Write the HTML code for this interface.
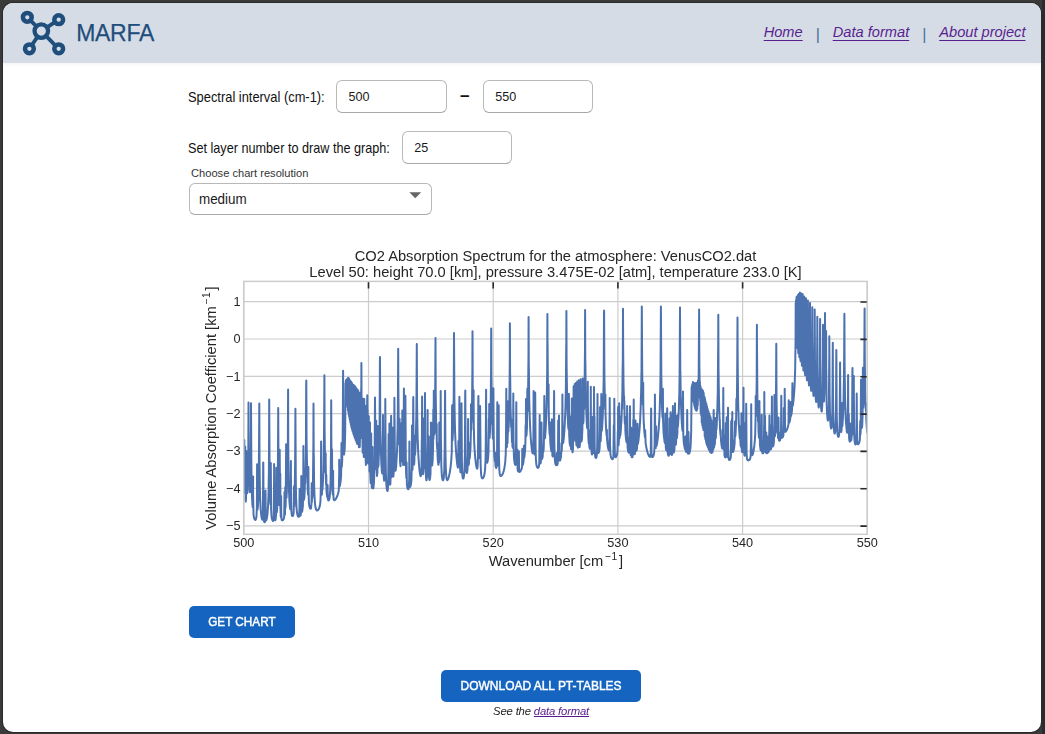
<!DOCTYPE html>
<html lang="en">
<head>
<meta charset="utf-8">
<title>MARFA</title>
<style>
html,body{margin:0;padding:0;}
body{width:1045px;height:734px;overflow:hidden;background:#3a3a3a;font-family:"Liberation Sans",sans-serif;position:relative;}
#strip{position:absolute;left:1042px;top:0;width:3px;height:734px;background:#2a2b2d;}
#win{position:absolute;left:3px;top:3px;width:1037.6px;height:728.7px;background:#fff;border-radius:10px;overflow:hidden;box-shadow:0 0 0 1px #2a2a2a;}
#hdr{position:absolute;left:0;top:0;width:1038px;height:60px;background:#d6dce6;box-shadow:0 1px 4px rgba(0,0,0,0.06);}
#logo{position:absolute;left:0;top:0;}
#brand{position:absolute;left:73.2px;top:15.7px;font-size:23px;line-height:28px;color:#1f4e7c;letter-spacing:-0.3px;-webkit-text-stroke:0.25px #1f4e7c;}
#nav{position:absolute;right:15.5px;top:20px;font-size:14.65px;line-height:18px;font-style:italic;color:#46729a;white-space:nowrap;}
#nav a{color:#581f8e;text-decoration:underline;text-decoration-thickness:1.2px;text-underline-offset:2.6px;}
#nav span{font-style:normal;display:inline-block;width:30px;text-align:center;font-size:16px;position:relative;top:2.6px;}
.lbl{position:absolute;font-size:13.9px;line-height:16px;color:#111;white-space:nowrap;transform-origin:0 50%;}
.inp{position:absolute;box-sizing:border-box;width:110.7px;height:33px;border:1px solid #b8b8b8;border-bottom-color:#a8a8a8;border-radius:6px;background:#fff;font-size:12.6px;line-height:32.2px;padding-left:11.6px;color:#1a1a1a;}
.btn{position:absolute;box-sizing:border-box;height:32px;border-radius:5px;background:#1565c0;color:#fff;font-size:12.5px;font-weight:normal;-webkit-text-stroke:0.45px #fff;line-height:32px;text-align:center;white-space:nowrap;}
.btn span{display:inline-block;transform:scaleX(0.94);transform-origin:50% 50%;}
</style>
</head>
<body>
<div id="strip"></div>
<div id="win">
<div id="hdr">
<svg id="logo" width="70" height="60" viewBox="3 3 70 60">
<g fill="none" stroke="#1f4e7c">
<g stroke-width="3.8">
<line x1="27.3" y1="17.3" x2="41.3" y2="31.1"/>
<line x1="58.7" y1="19.7" x2="41.3" y2="31.1"/>
<line x1="29.4" y1="48.8" x2="41.3" y2="31.1"/>
<line x1="58.7" y1="48.8" x2="41.3" y2="31.1"/>
</g>
<circle cx="41.3" cy="31.1" r="6.75" fill="#d6dce6" stroke-width="4.3"/>
<g stroke-width="4.5">
<circle cx="27.3" cy="17.3" r="4.4" fill="#d6dce6"/>
<circle cx="58.7" cy="19.7" r="4.4" fill="#d6dce6"/>
<circle cx="29.4" cy="48.8" r="4.4" fill="#d6dce6"/>
<circle cx="58.7" cy="48.8" r="4.4" fill="#d6dce6"/>
</g>
</g>
</svg>
<div id="brand">MARFA</div>
<div id="nav"><a>Home</a><span>|</span><a>Data format</a><span>|</span><a>About project</a></div>
</div>
<div class="lbl" style="left:185.2px;top:86px;transform:scaleX(0.927);">Spectral interval (cm-1):</div>
<div class="inp" style="left:333px;top:77px;">500</div>
<div class="lbl" style="left:456.9px;top:82.6px;font-weight:bold;font-size:17px;line-height:20px;">–</div>
<div class="inp" style="left:479.6px;top:77px;width:110.2px;">550</div>
<div class="lbl" style="left:185.4px;top:137px;transform:scaleX(0.911);">Set layer number to draw the graph:</div>
<div class="inp" style="left:398.6px;top:128px;">25</div>
<div class="lbl" style="left:187.6px;top:163px;font-size:11.7px;line-height:14px;color:#333;transform:scaleX(0.951);">Choose chart resolution</div>
<div class="inp" style="left:185.5px;top:179.6px;width:243px;height:32.4px;line-height:30.6px;font-size:13.9px;padding-left:9.8px;"><span style="display:inline-block;transform:scaleX(0.965);transform-origin:0 50%;">medium</span><svg style="position:absolute;left:219.5px;top:8px" width="13" height="7" viewBox="0 0 13 7"><path d="M0.3 0.3 L12.2 0.3 L6.25 6.2 Z" fill="#666"/></svg></div>
<svg id="chart" style="position:absolute;left:0;top:0;will-change:transform;" width="1038" height="729" viewBox="3 3 1038 729" font-family="Liberation Sans, sans-serif" fill="#262626">
<defs><clipPath id="cp"><rect x="243.7" y="281.4" width="623.5" height="252.89999999999998"/></clipPath></defs>
<path d="M243.8,281.4V534.3M368.5,281.4V534.3M493.2,281.4V534.3M617.9,281.4V534.3M742.6,281.4V534.3M867.3,281.4V534.3M243.7,525.8H867.2M243.7,488.4H867.2M243.7,451.1H867.2M243.7,413.7H867.2M243.7,376.4H867.2M243.7,339.0H867.2M243.7,301.6H867.2" stroke="#cccccc" stroke-width="1.2" fill="none"/>
<path clip-path="url(#cp)" d="M243.8,453.4 244.1,474.8 244.1,472.7 244.2,470.6 244.3,440.1 244.5,479.8 244.5,482.3 244.8,492.5 244.9,489.9 244.9,487.8 245.2,446.5 245.3,451.3 245.3,458.9 245.6,499.4 245.7,500.0 245.8,501.6 246.0,498.5 246.0,497.4 246.3,451.0 246.4,461.5 246.4,468.7 246.6,490.4 246.8,477.8 246.8,472.2 246.9,455.3 247.1,493.0 247.2,493.3 247.4,473.3 247.5,481.4 247.5,479.5 247.6,460.9 247.8,482.6 247.9,482.0 247.9,481.4 248.3,458.5 248.3,455.7 248.5,402.5 248.6,429.1 248.7,435.2 249.0,474.9 249.0,476.3 249.4,489.4 249.4,489.9 249.6,491.8 249.8,479.3 249.8,477.0 250.0,492.2 250.1,491.0 250.2,490.6 250.5,478.8 250.5,477.4 250.9,441.5 250.9,436.3 251.0,403.2 251.3,453.7 251.3,456.9 251.6,483.4 251.7,484.5 252.0,496.7 252.0,497.4 252.4,504.3 252.4,504.6 252.7,507.1 252.8,506.9 252.8,506.6 253.1,476.4 253.1,494.7 253.2,499.0 253.5,514.0 253.5,514.3 253.9,516.9 253.9,517.0 254.2,518.3 254.3,518.4 254.6,519.3 254.6,519.3 255.0,519.7 255.0,519.8 255.3,519.9 255.4,519.9 255.4,519.8 255.7,519.5 255.8,519.5 256.1,518.7 256.1,518.6 256.5,516.4 256.5,516.2 256.9,506.4 256.9,504.5 257.1,464.2 257.2,498.2 257.3,501.0 257.6,509.6 257.6,509.6 257.6,509.5 258.0,505.5 258.0,505.1 258.4,496.9 258.4,496.1 258.7,480.2 258.8,478.5 259.1,435.3 259.1,438.9 259.1,437.0 259.3,403.5 259.5,457.4 259.5,460.6 259.9,487.0 259.9,488.2 260.2,500.4 260.3,501.0 260.6,508.1 260.6,508.5 261.0,512.9 261.0,513.2 261.4,516.1 261.4,516.3 261.7,518.2 261.8,518.3 262.1,519.4 262.1,519.4 262.4,519.7 262.5,519.5 262.5,519.5 262.9,516.1 262.9,515.5 263.2,462.5 263.3,462.7 263.6,516.0 263.6,516.8 264.0,521.0 264.0,521.2 264.4,522.1 264.4,522.1 264.6,522.3 264.7,522.3 264.7,522.3 265.1,521.7 265.1,521.6 265.5,508.8 265.5,502.9 265.5,490.5 265.8,520.1 265.9,520.2 266.0,520.6 266.2,520.4 266.2,520.4 266.6,519.4 266.6,519.3 267.0,517.7 267.0,517.5 267.3,515.1 267.4,514.9 267.7,511.2 267.7,510.9 268.1,505.1 268.1,504.5 268.5,494.9 268.5,494.0 268.8,475.4 268.9,473.4 269.2,405.4 269.2,399.5 269.6,468.0 269.6,471.3 270.0,492.6 270.0,493.6 270.3,502.8 270.4,503.2 270.5,504.4 270.7,494.8 270.7,490.4 270.8,463.0 271.1,508.1 271.1,509.1 271.5,515.7 271.5,515.9 271.8,518.3 271.9,518.4 272.2,519.7 272.2,519.8 272.6,520.6 272.6,520.6 273.0,521.0 273.0,521.0 273.0,521.0 273.3,520.7 273.4,520.6 273.7,518.0 273.7,517.5 274.1,476.4 274.1,466.3 274.1,464.0 274.3,503.2 274.5,496.7 274.5,503.4 274.8,519.5 274.9,519.6 275.1,520.3 275.2,520.3 275.2,520.3 275.6,519.5 275.6,519.4 275.9,516.4 276.0,515.9 276.3,471.3 276.3,467.8 276.7,511.7 276.7,512.0 276.8,512.3 277.1,510.2 277.1,509.8 277.4,502.3 277.5,501.5 277.8,484.5 277.8,482.6 278.2,414.3 278.2,408.1 278.6,480.4 278.6,482.5 278.9,499.9 279.0,500.6 279.2,504.9 279.3,504.5 279.3,504.2 279.7,449.8 279.7,450.8 280.1,505.9 280.1,506.0 280.3,473.8 280.4,507.2 280.5,509.2 280.8,516.9 280.8,517.0 280.9,517.0 281.1,496.0 281.2,508.6 281.2,512.4 281.6,519.7 281.6,519.8 281.9,520.3 282.0,520.3 282.3,520.4 282.3,520.4 282.7,520.3 282.7,520.3 283.1,520.0 283.1,520.0 283.4,519.5 283.5,519.5 283.8,518.7 283.8,518.6 284.2,516.9 284.2,516.6 284.5,491.9 284.6,510.4 284.6,512.2 284.8,514.8 284.9,514.0 285.0,513.8 285.3,486.9 285.3,488.1 285.5,507.6 285.7,505.2 285.7,504.5 286.0,464.4 286.1,454.7 286.1,444.3 286.4,496.3 286.4,496.9 286.5,497.7 286.8,492.3 286.8,491.0 287.0,448.3 287.2,477.4 287.2,479.8 287.3,482.4 287.5,473.7 287.6,472.3 287.9,435.2 287.9,429.8 288.1,389.4 288.3,446.8 288.3,450.4 288.7,478.2 288.7,479.4 289.0,492.2 289.1,492.9 289.4,500.5 289.4,500.9 289.8,505.7 289.8,506.0 290.2,508.8 290.2,508.9 290.3,509.3 290.5,508.1 290.6,507.6 290.9,461.1 290.9,465.1 290.9,473.8 291.3,508.8 291.3,509.6 291.7,514.4 291.7,514.5 292.0,515.7 292.1,515.8 292.4,516.1 292.4,516.1 292.5,516.1 292.8,516.0 292.8,515.9 293.2,515.2 293.2,515.2 293.5,513.6 293.6,513.4 293.9,503.2 293.9,498.9 294.0,486.2 294.2,506.6 294.3,506.1 294.3,505.8 294.7,493.2 294.7,490.2 295.0,471.9 295.1,465.7 295.4,414.4 295.4,408.8 295.8,478.9 295.8,480.9 296.1,498.5 296.2,499.3 296.5,507.2 296.5,507.6 296.9,511.6 296.9,511.8 297.3,514.1 297.3,514.2 297.6,515.5 297.7,515.5 298.0,516.3 298.0,516.3 298.4,516.7 298.4,516.7 298.7,516.8 298.8,516.8 298.8,516.8 299.1,516.4 299.2,516.3 299.5,505.5 299.5,500.0 299.6,489.0 299.9,515.4 299.9,515.5 300.1,515.9 300.3,515.8 300.3,515.8 300.6,515.1 300.7,515.0 301.0,512.8 301.0,512.4 301.3,475.9 301.4,486.1 301.4,493.5 301.8,511.9 301.8,512.0 301.9,512.0 302.1,511.5 302.2,511.4 302.5,509.6 302.5,509.4 302.9,505.6 302.9,505.1 303.3,486.8 303.3,483.1 303.4,446.0 303.6,490.5 303.7,492.4 304.0,499.7 304.0,499.7 304.0,499.6 304.4,497.0 304.4,496.7 304.8,489.2 304.8,487.9 304.9,469.2 305.1,483.4 305.2,483.0 305.5,472.7 305.5,471.7 305.9,452.4 305.9,450.4 306.2,385.1 306.3,380.5 306.6,442.7 306.6,442.5 306.6,442.9 307.0,463.1 307.0,466.4 307.2,476.6 307.4,470.2 307.4,474.4 307.7,490.3 307.8,490.8 308.1,494.7 308.1,494.7 308.4,467.0 308.5,484.5 308.5,488.8 308.9,502.4 308.9,502.7 309.2,505.4 309.3,505.5 309.6,507.1 309.6,507.2 310.0,508.1 310.0,508.2 310.4,508.6 310.4,508.7 310.5,508.7 310.7,508.6 310.8,508.6 311.1,507.8 311.1,507.7 311.5,503.3 311.5,502.1 311.7,483.2 311.9,501.8 311.9,501.9 312.1,486.2 312.2,497.1 312.3,497.8 312.3,498.2 312.6,493.5 312.6,492.9 313.0,479.6 313.0,478.2 313.4,442.2 313.4,437.0 313.5,403.6 313.7,453.3 313.8,456.7 314.1,483.3 314.1,484.4 314.5,495.5 314.5,496.1 314.9,502.0 314.9,502.3 315.2,505.6 315.3,505.8 315.6,507.8 315.6,507.9 316.0,509.1 316.0,509.2 316.4,509.9 316.4,510.0 316.7,510.3 316.7,510.3 317.1,510.5 317.1,510.5 317.2,510.5 317.5,510.4 317.5,510.4 317.8,510.2 317.9,510.2 318.2,509.8 318.2,509.8 318.6,509.3 318.6,509.2 319.0,508.6 319.0,508.5 319.3,507.6 319.4,507.6 319.7,506.3 319.7,506.2 320.1,504.5 320.1,504.3 320.5,500.9 320.5,500.6 320.8,488.4 320.9,486.4 321.1,441.4 321.2,470.8 321.2,475.3 321.6,494.3 321.6,494.5 321.7,494.8 322.0,493.2 322.0,492.7 322.2,480.9 322.3,490.2 322.4,490.2 322.7,486.2 322.7,485.8 323.1,479.2 323.1,478.6 323.5,468.7 323.5,467.8 323.8,447.1 323.9,443.3 324.2,413.8 324.2,408.5 324.4,375.2 324.6,426.1 324.6,429.4 325.0,456.7 325.0,458.0 325.3,470.8 325.4,471.4 325.5,472.8 325.7,453.2 325.7,458.1 325.7,464.1 326.1,484.6 326.1,484.7 326.3,475.0 326.5,489.9 326.5,490.4 326.8,494.5 326.9,494.7 327.2,496.9 327.2,497.0 327.4,497.4 327.6,492.6 327.6,489.4 327.6,484.9 327.9,499.4 328.0,499.5 328.3,500.4 328.3,500.4 328.6,500.5 328.7,500.5 328.7,500.5 329.1,500.0 329.1,499.9 329.4,498.6 329.5,498.4 329.8,495.9 329.8,495.6 330.2,490.8 330.2,490.4 330.6,480.7 330.6,479.7 330.9,456.5 331.0,453.7 331.2,400.2 331.3,427.3 331.3,433.3 331.7,470.6 331.7,471.5 331.8,472.5 332.0,449.5 332.1,462.8 332.1,462.7 332.4,490.6 332.5,491.1 332.8,494.4 332.8,494.4 332.8,494.2 333.1,470.7 333.2,486.7 333.2,489.8 333.6,498.8 333.6,498.9 333.9,499.9 334.0,499.9 334.3,500.2 334.3,500.2 334.4,500.2 334.7,500.1 334.7,500.1 335.1,499.9 335.1,499.9 335.4,499.5 335.5,499.5 335.8,499.0 335.8,498.9 336.2,498.3 336.2,498.3 336.6,497.6 336.6,497.6 336.9,496.8 337.0,496.7 337.3,495.9 337.3,495.8 337.7,494.8 337.7,494.8 338.0,493.7 338.1,493.6 338.4,492.3 338.4,492.2 338.8,490.2 338.8,490.0 339.2,474.6 339.2,469.2 339.2,459.7 339.5,486.1 339.6,486.3 339.6,486.5 339.9,485.7 339.9,485.6 340.3,483.6 340.3,483.4 340.7,480.8 340.7,480.6 341.0,476.8 341.1,476.5 341.4,458.0 341.4,452.4 341.5,443.1 341.8,467.0 341.8,466.9 341.8,466.8 342.2,460.2 342.2,459.5 342.5,445.6 342.6,444.1 342.9,408.9 342.9,403.7 343.1,370.7 343.3,420.8 343.3,423.9 343.7,447.4 343.7,448.3 344.0,454.4 344.1,454.5 344.1,454.5 344.4,448.0 344.4,450.7 344.4,451.4 344.5,451.8 344.8,446.6 344.8,446.0 345.2,431.4 345.2,429.7 345.5,383.2 345.6,384.7 345.8,389.9 345.9,380.6 345.9,383.7 345.9,389.0 346.1,380.3 346.2,395.8 346.3,380.5 346.3,385.7 346.5,379.7 346.7,401.4 346.7,399.5 346.8,379.2 346.9,404.0 347.0,389.3 347.1,382.3 347.3,406.1 347.4,378.7 347.4,380.9 347.6,407.8 347.8,378.7 347.8,384.5 347.9,410.2 348.1,377.8 348.2,380.1 348.4,412.4 348.5,389.0 348.5,381.6 348.6,377.9 348.8,414.9 348.9,407.6 348.9,403.0 349.0,378.6 349.2,416.9 349.3,416.9 349.3,415.9 349.5,379.4 349.6,412.2 349.7,415.3 349.7,419.4 350.0,380.7 350.0,386.6 350.3,422.3 350.4,415.6 350.4,411.9 350.5,381.0 350.8,422.7 350.8,424.0 350.8,424.8 351.1,381.7 351.1,385.4 351.2,393.1 351.4,427.3 351.5,423.2 351.5,420.7 351.7,382.6 351.9,421.3 351.9,424.0 352.0,429.6 352.3,404.0 352.3,396.5 352.3,383.7 352.6,431.3 352.7,431.8 352.7,431.8 353.0,384.9 353.0,390.9 353.4,433.9 353.4,433.5 353.4,432.7 353.7,385.1 353.8,402.7 353.8,409.6 354.1,436.0 354.1,434.0 354.2,432.6 354.4,385.8 354.5,411.7 354.5,417.2 354.8,438.0 354.9,435.5 354.9,433.9 355.2,386.6 355.3,412.5 355.3,418.1 355.6,440.0 355.6,438.4 355.7,437.2 355.9,387.6 356.0,405.2 356.0,412.2 356.4,441.9 356.4,441.7 356.4,441.1 356.8,389.0 356.8,395.0 357.1,443.5 357.2,443.8 357.2,443.9 357.5,410.1 357.5,402.5 357.6,389.6 357.9,440.6 357.9,441.5 358.1,442.8 358.2,434.1 358.3,430.9 358.4,391.1 358.6,424.8 358.6,429.4 358.9,447.3 359.0,446.0 359.0,445.1 359.3,392.8 359.4,396.3 359.4,403.6 359.7,444.0 359.8,445.3 359.8,447.1 360.1,430.0 360.1,425.8 360.3,394.6 360.5,416.4 360.5,422.2 360.7,437.9 360.9,433.8 360.9,432.5 361.2,388.1 361.3,388.2 361.4,363.1 361.6,412.5 361.6,415.6 362.0,434.6 362.0,434.3 362.0,433.5 362.2,398.6 362.4,431.6 362.4,435.2 362.7,452.6 362.8,452.7 363.1,429.9 363.1,424.6 363.2,398.8 363.5,443.9 363.5,446.5 363.8,457.0 363.9,456.3 363.9,455.7 364.2,411.4 364.3,403.6 364.3,399.1 364.6,450.0 364.6,450.4 364.9,416.0 365.0,438.0 365.0,442.2 365.1,448.1 365.4,405.9 365.4,408.2 365.7,461.1 365.8,462.0 365.9,464.9 366.1,461.9 366.1,460.8 366.5,408.9 366.5,414.8 366.8,453.6 366.9,452.9 366.9,452.1 367.2,399.1 367.3,395.2 367.5,427.4 367.6,410.0 367.6,412.4 368.0,460.6 368.0,461.5 368.1,463.5 368.4,436.4 368.4,437.0 368.5,457.3 368.7,427.4 368.7,419.9 368.8,416.2 369.0,455.0 369.1,441.7 369.1,440.1 369.5,470.2 369.5,471.0 369.5,471.5 369.8,444.9 369.9,443.6 370.0,422.4 370.2,469.4 370.2,471.3 370.6,482.6 370.6,482.8 370.7,483.0 371.0,475.6 371.0,473.5 371.2,433.6 371.3,466.7 371.4,470.2 371.7,486.7 371.7,486.9 371.9,487.9 372.1,486.8 372.1,486.4 372.5,447.0 372.5,452.6 372.8,487.2 372.9,487.6 373.1,488.5 373.2,488.4 373.2,488.3 373.6,486.5 373.6,486.3 374.0,482.1 374.0,481.7 374.3,473.3 374.4,472.4 374.7,451.1 374.7,448.5 375.0,397.6 375.1,410.3 375.1,413.2 375.5,461.6 375.5,462.8 375.8,469.1 375.8,468.3 375.9,467.7 376.2,420.7 376.2,426.1 376.6,463.6 376.6,465.7 377.0,475.8 377.0,475.9 377.0,476.0 377.3,473.3 377.4,472.7 377.7,435.6 377.7,428.8 377.8,426.1 378.1,466.1 378.1,466.5 378.2,467.0 378.5,464.6 378.5,464.2 378.8,455.7 378.9,454.7 379.1,430.5 379.2,442.0 379.2,442.2 379.6,425.0 379.6,423.0 379.9,360.7 380.0,356.9 380.3,420.8 380.3,423.0 380.7,443.8 380.7,444.8 381.1,456.5 381.1,457.2 381.4,464.9 381.5,465.4 381.8,470.5 381.8,470.8 382.2,473.3 382.2,473.3 382.2,473.4 382.6,470.2 382.6,469.6 382.9,436.6 383.0,430.0 383.0,415.0 383.3,452.2 383.3,455.5 383.7,475.5 383.7,476.1 384.1,480.4 384.1,480.5 384.2,480.7 384.4,479.4 384.5,479.1 384.8,470.5 384.8,469.4 385.2,436.4 385.2,431.3 385.3,399.1 385.6,448.1 385.6,451.2 385.9,474.5 386.0,475.4 386.3,483.9 386.3,484.3 386.7,488.2 386.7,488.4 387.1,490.3 387.1,490.4 387.4,491.0 387.5,490.9 387.8,490.0 387.8,489.9 388.2,484.4 388.2,483.6 388.6,433.9 388.6,435.3 388.9,476.9 388.9,476.8 389.0,476.4 389.2,441.7 389.3,450.3 389.3,450.2 389.4,423.5 389.7,467.5 389.7,469.9 390.0,483.7 390.1,484.0 390.2,484.7 390.4,483.5 390.4,483.2 390.8,471.6 390.8,469.9 391.1,415.8 391.2,423.4 391.2,431.3 391.4,465.3 391.5,456.3 391.6,459.3 391.8,477.0 391.9,475.8 391.9,475.1 392.3,427.5 392.3,429.0 392.3,435.8 392.6,472.2 392.7,471.7 392.7,470.9 392.9,433.4 393.0,458.0 393.1,462.2 393.4,476.4 393.4,476.4 393.8,471.0 393.8,470.3 394.2,451.0 394.2,448.4 394.4,397.7 394.5,418.5 394.6,419.6 394.9,461.4 394.9,462.5 395.3,470.0 395.3,470.2 395.5,470.7 395.7,470.3 395.7,470.2 396.0,467.4 396.1,467.1 396.4,462.6 396.4,462.2 396.8,455.8 396.8,455.3 397.2,446.3 397.2,445.6 397.5,432.0 397.6,430.8 397.9,404.8 397.9,401.8 398.2,348.7 398.3,375.0 398.3,381.1 398.7,421.9 398.7,423.5 399.0,439.8 399.1,440.6 399.3,444.8 399.4,437.7 399.4,433.5 399.6,418.8 399.8,447.8 399.8,450.0 400.1,462.5 400.2,462.9 400.5,466.2 400.5,466.2 400.9,450.9 400.9,446.3 401.0,423.9 401.3,460.9 401.3,461.3 401.3,461.4 401.6,422.9 401.6,428.5 401.7,435.8 401.9,461.3 402.0,458.8 402.0,457.4 402.3,410.5 402.4,431.0 402.4,437.2 402.7,460.1 402.8,453.9 402.8,449.5 402.9,437.7 403.1,465.0 403.2,465.0 403.5,453.0 403.5,451.3 403.9,392.1 403.9,388.6 404.3,449.2 404.3,451.0 404.6,464.4 404.7,464.6 404.7,464.9 405.0,458.3 405.0,456.9 405.4,399.3 405.4,395.7 405.8,456.6 405.8,458.5 406.1,473.9 406.2,474.6 406.4,478.2 406.5,476.0 406.5,474.0 406.6,462.3 406.9,483.6 406.9,484.0 407.3,487.1 407.3,487.2 407.6,488.5 407.7,488.5 408.0,489.1 408.0,489.2 408.2,489.2 408.4,489.2 408.4,489.2 408.8,488.2 408.8,488.0 409.1,481.3 409.2,479.9 409.4,441.5 409.5,468.2 409.5,471.9 409.9,486.1 409.9,486.2 410.1,486.9 410.2,486.9 410.3,486.8 410.6,486.0 410.6,485.9 411.0,484.1 411.0,484.0 411.4,480.7 411.4,480.3 411.7,469.3 411.8,467.5 412.0,425.5 412.1,449.7 412.1,451.8 412.5,469.7 412.5,469.6 412.5,469.5 412.9,459.1 412.9,457.6 413.2,400.8 413.3,397.1 413.6,454.8 413.6,456.3 414.0,464.5 414.0,464.6 414.1,464.6 414.4,460.4 414.4,459.3 414.6,435.7 414.7,452.9 414.8,451.5 414.9,441.0 415.1,454.8 415.1,454.5 415.1,454.3 415.5,447.9 415.5,447.3 415.9,437.2 415.9,436.4 416.2,420.2 416.3,418.6 416.6,381.2 416.6,376.0 416.8,343.9 417.0,393.0 417.0,396.4 417.4,424.4 417.4,425.7 417.7,439.8 417.8,440.6 418.1,449.9 418.1,450.5 418.5,457.4 418.5,457.8 418.9,463.1 418.9,463.4 419.2,467.5 419.3,467.8 419.6,471.1 419.6,471.3 420.0,473.7 420.0,473.9 420.4,475.6 420.4,475.6 420.7,476.2 420.7,476.2 420.7,476.2 421.1,474.9 421.1,474.7 421.5,468.6 421.5,467.7 421.8,440.1 421.8,443.0 421.9,443.4 422.1,396.4 422.2,422.2 422.2,428.1 422.6,463.8 422.6,464.9 423.0,473.4 423.0,473.6 423.1,474.2 423.3,472.1 423.4,471.5 423.7,434.5 423.7,426.9 423.8,418.6 424.1,465.4 424.1,466.3 424.2,467.9 424.5,463.5 424.5,462.5 424.8,430.0 424.9,424.9 425.0,393.1 425.2,441.7 425.2,444.7 425.6,467.9 425.6,468.8 426.0,476.9 426.0,477.2 426.3,480.1 426.4,480.2 426.5,480.4 426.7,479.8 426.7,479.7 427.1,473.9 427.1,473.1 427.5,441.4 427.5,435.8 427.6,410.1 427.8,459.2 427.9,461.6 428.2,475.9 428.2,476.2 428.3,476.8 428.6,471.5 428.6,469.6 428.8,436.5 429.0,468.2 429.0,470.5 429.3,479.6 429.4,479.7 429.5,480.0 429.7,479.8 429.7,479.7 430.1,478.1 430.1,478.0 430.5,474.0 430.5,473.5 430.8,451.5 430.9,446.7 430.9,422.6 431.2,461.6 431.2,462.3 431.3,462.8 431.6,426.1 431.6,422.9 431.9,464.5 432.0,464.8 432.1,465.5 432.3,464.5 432.3,464.3 432.7,459.6 432.7,459.1 433.1,445.0 433.1,442.5 433.3,409.6 433.4,438.2 433.5,438.8 433.5,438.9 433.8,394.2 433.8,390.7 434.2,431.8 434.2,433.0 434.3,434.6 434.6,429.8 434.6,429.0 434.9,413.8 435.0,412.4 435.3,375.2 435.3,370.0 435.5,337.9 435.7,387.4 435.7,390.7 436.1,418.4 436.1,419.6 436.4,432.9 436.5,433.4 436.7,424.0 436.8,440.9 436.8,442.0 437.2,449.3 437.2,449.0 437.3,443.3 437.6,456.2 437.6,456.6 437.9,461.2 438.0,461.4 438.3,464.3 438.3,464.4 438.5,464.8 438.7,459.6 438.7,456.6 438.8,449.1 439.0,462.8 439.1,460.7 439.1,459.6 439.3,422.6 439.4,446.6 439.5,449.5 439.6,446.2 439.8,459.2 439.8,459.2 439.8,458.7 440.1,427.2 440.2,448.7 440.2,450.6 440.3,452.0 440.6,427.7 440.6,422.8 440.7,391.0 440.9,438.6 441.0,441.6 441.3,464.2 441.3,465.0 441.7,473.0 441.7,473.4 442.0,477.1 442.1,477.3 442.4,479.2 442.4,479.3 442.8,480.2 442.8,480.2 443.0,480.3 443.2,480.2 443.2,480.2 443.5,479.2 443.6,479.1 443.9,476.4 443.9,476.1 444.3,469.8 444.3,469.0 444.6,451.4 444.7,453.6 444.7,452.4 445.0,394.4 445.1,390.8 445.4,444.2 445.4,447.3 445.8,467.7 445.8,468.4 446.2,475.2 446.2,475.5 446.5,478.4 446.6,478.5 446.9,479.7 446.9,479.8 447.3,480.1 447.3,480.1 447.7,479.8 447.7,479.8 448.0,479.2 448.1,479.2 448.4,478.3 448.4,478.2 448.8,477.1 448.8,477.0 449.2,475.6 449.2,475.4 449.5,473.8 449.6,473.6 449.9,471.7 449.9,471.5 450.3,469.2 450.3,469.0 450.7,466.3 450.7,466.1 451.0,462.8 451.1,462.5 451.4,458.3 451.4,457.9 451.8,451.0 451.8,450.2 452.1,408.5 452.2,405.2 452.5,440.4 452.5,440.4 452.5,440.2 452.9,433.9 452.9,433.2 453.3,420.0 453.3,419.7 453.6,400.7 453.7,398.6 454.0,336.6 454.0,333.0 454.4,396.4 454.4,398.6 454.8,419.7 454.8,420.8 455.1,433.0 455.2,433.7 455.5,442.2 455.5,442.7 455.9,449.1 455.9,449.5 456.3,454.6 456.3,454.9 456.6,459.0 456.7,459.3 457.0,462.6 457.0,462.9 457.4,465.5 457.4,465.6 457.8,467.3 457.8,467.4 457.9,467.6 458.1,465.6 458.2,464.9 458.4,441.0 458.5,462.8 458.5,463.9 458.7,465.6 458.9,462.4 458.9,461.6 459.3,433.0 459.3,428.1 459.4,396.8 459.6,444.1 459.7,447.0 460.0,466.2 460.0,466.9 460.4,471.8 460.4,472.0 460.6,472.4 460.8,471.8 460.8,471.6 461.1,463.3 461.2,462.0 461.5,407.1 461.5,403.2 461.9,460.8 461.9,462.3 462.2,473.5 462.3,473.9 462.6,477.3 462.6,477.4 463.0,478.4 463.0,478.5 463.2,478.5 463.4,478.4 463.4,478.4 463.7,477.3 463.8,477.2 464.1,474.8 464.1,474.6 464.5,469.2 464.5,468.6 464.9,454.7 464.9,453.0 465.2,394.1 465.3,390.5 465.6,451.0 465.6,452.8 466.0,466.9 466.0,467.4 466.4,471.8 466.4,471.9 466.7,473.0 466.8,473.0 466.8,473.0 467.1,472.4 467.1,472.3 467.5,469.8 467.5,469.5 467.9,456.1 467.9,453.3 468.1,419.1 468.2,454.6 468.3,456.7 468.6,465.1 468.6,465.1 469.0,463.0 469.0,462.6 469.3,443.0 469.4,456.1 469.4,457.5 469.5,459.2 469.7,457.9 469.8,457.7 470.1,453.7 470.1,453.4 470.5,447.6 470.5,447.1 470.9,432.2 470.9,429.2 471.0,404.3 471.2,430.0 471.3,429.8 471.4,416.4 471.6,423.1 471.6,422.5 472.0,407.1 472.0,405.6 472.4,368.5 472.4,363.3 472.5,331.2 472.7,380.7 472.7,383.9 473.1,411.1 473.1,412.3 473.4,419.3 473.5,416.7 473.5,414.4 473.6,390.3 473.8,428.0 473.9,429.7 474.2,442.3 474.2,442.9 474.6,449.4 474.6,449.8 475.0,454.6 475.0,454.9 475.3,458.8 475.4,459.0 475.7,462.2 475.7,462.4 476.1,464.9 476.1,465.1 476.5,467.0 476.5,467.1 476.8,468.4 476.9,468.4 477.1,468.7 477.2,468.7 477.2,468.6 477.6,466.5 477.6,466.2 478.0,456.6 478.0,455.2 478.3,399.6 478.4,396.0 478.7,442.2 478.7,446.2 479.0,458.0 479.1,452.9 479.1,450.0 479.2,424.9 479.5,457.5 479.5,457.9 479.7,437.6 479.8,443.5 479.9,440.2 480.1,405.9 480.2,414.0 480.2,415.6 480.6,462.6 480.6,463.8 481.0,472.5 481.0,472.9 481.3,476.0 481.4,476.1 481.7,477.5 481.7,477.6 482.1,478.2 482.1,478.2 482.5,478.4 482.5,478.4 482.5,478.4 482.8,478.3 482.8,478.3 483.2,477.9 483.2,477.8 483.6,477.2 483.6,477.2 483.9,476.3 484.0,476.2 484.3,474.9 484.3,474.8 484.7,472.8 484.7,472.6 485.1,469.4 485.1,469.1 485.4,462.6 485.5,461.8 485.8,442.9 485.8,440.3 486.1,389.7 486.2,415.4 486.2,421.2 486.6,454.8 486.6,455.7 486.9,462.0 487.0,462.2 487.2,462.8 487.3,462.6 487.3,462.6 487.7,461.0 487.7,460.8 488.1,457.9 488.1,457.6 488.4,452.7 488.5,452.2 488.8,425.5 488.8,419.0 489.0,433.3 489.2,407.4 489.2,404.1 489.6,438.1 489.6,438.0 489.9,432.6 490.0,432.0 490.3,422.0 490.3,421.1 490.7,404.8 490.7,403.3 491.1,365.9 491.1,360.7 491.2,328.5 491.4,378.1 491.5,381.4 491.8,409.1 491.8,410.4 492.2,423.8 492.2,424.3 492.4,418.6 492.6,432.4 492.6,433.2 492.9,438.7 493.0,438.7 493.3,422.4 493.3,418.1 493.4,388.3 493.7,432.8 493.7,435.2 494.0,450.9 494.1,451.5 494.4,457.2 494.4,457.5 494.8,460.9 494.8,461.0 494.9,461.4 495.1,452.7 495.2,457.2 495.2,459.6 495.5,465.9 495.6,466.0 495.9,467.5 495.9,467.6 496.2,468.0 496.3,468.0 496.3,468.0 496.7,465.9 496.7,465.6 497.0,452.7 497.1,450.5 497.3,402.3 497.4,427.6 497.4,433.2 497.8,462.5 497.8,463.1 498.0,465.5 498.2,464.6 498.2,464.2 498.5,440.6 498.6,436.0 498.7,405.3 498.9,451.0 498.9,453.5 499.3,469.2 499.3,469.6 499.7,473.5 499.7,473.6 500.0,475.1 500.1,475.2 500.4,475.8 500.4,475.8 500.8,476.0 500.8,476.0 500.9,476.0 501.2,475.9 501.2,475.9 501.5,475.7 501.6,475.7 501.9,475.3 501.9,475.2 502.3,474.7 502.3,474.7 502.7,474.0 502.7,473.9 503.0,473.1 503.1,473.0 503.4,472.0 503.4,471.9 503.8,470.7 503.8,470.6 504.1,469.1 504.2,469.0 504.5,467.3 504.5,467.1 504.9,464.9 504.9,464.7 505.3,461.6 505.3,461.3 505.6,455.9 505.7,455.3 506.0,439.6 506.0,437.3 506.3,388.7 506.4,413.8 506.4,419.3 506.8,446.1 506.8,446.5 506.9,447.0 507.1,436.0 507.2,431.3 507.2,422.0 507.5,443.2 507.5,443.1 507.5,442.9 507.9,429.7 507.9,426.6 508.0,401.3 508.3,430.8 508.3,431.3 508.3,431.6 508.6,427.3 508.7,426.7 509.0,416.7 509.0,415.8 509.4,399.5 509.4,398.0 509.8,360.0 509.8,355.1 509.9,323.3 510.1,372.8 510.2,376.1 510.5,403.9 510.5,405.2 510.9,419.3 510.9,420.0 511.2,427.2 511.3,427.1 511.3,426.6 511.4,419.8 511.6,430.4 511.7,432.8 512.0,441.9 512.0,442.2 512.3,436.0 512.4,444.9 512.4,445.6 512.7,447.7 512.8,447.4 512.8,447.2 513.1,428.0 513.2,423.6 513.3,393.6 513.5,438.0 513.5,440.4 513.9,455.1 513.9,455.6 514.2,460.1 514.3,460.4 514.6,462.9 514.6,463.0 515.0,464.4 515.0,464.5 515.3,464.9 515.4,464.8 515.4,464.7 515.7,461.7 515.8,461.2 516.1,437.5 516.1,432.9 516.3,402.2 516.5,447.5 516.5,450.0 516.9,464.2 516.9,464.5 516.9,464.8 517.2,452.5 517.2,460.6 517.3,461.3 517.4,449.4 517.6,468.6 517.6,469.0 518.0,471.1 518.0,471.2 518.3,471.6 518.4,471.6 518.4,471.6 518.7,467.7 518.8,466.1 518.9,451.3 519.1,470.5 519.1,470.8 519.5,471.9 519.5,471.9 519.6,472.0 519.9,471.9 519.9,471.8 520.2,471.5 520.3,471.5 520.6,471.0 520.6,471.0 521.0,470.3 521.0,470.3 521.4,469.5 521.4,469.4 521.7,468.4 521.8,468.3 522.1,466.1 522.1,465.7 522.3,449.1 522.5,463.5 522.5,464.1 522.7,465.1 522.9,464.7 522.9,464.6 523.2,463.2 523.3,463.1 523.6,460.8 523.6,460.6 523.9,445.7 524.0,455.1 524.0,456.3 524.1,457.8 524.4,457.0 524.4,456.8 524.7,454.3 524.7,454.1 525.1,450.6 525.1,450.3 525.5,438.9 525.5,435.6 525.6,425.0 525.7,437.2 525.8,429.3 525.9,426.0 526.0,399.1 526.2,433.3 526.2,434.2 526.4,435.9 526.6,434.2 526.6,433.9 527.0,427.1 527.0,426.4 527.3,391.7 527.4,388.5 527.6,411.3 527.7,408.5 527.7,408.2 528.1,393.2 528.1,391.7 528.5,354.3 528.5,349.1 528.6,317.0 528.8,366.5 528.9,369.8 529.2,397.6 529.2,398.9 529.6,413.1 529.6,413.9 530.0,423.5 530.0,424.0 530.3,431.1 530.4,431.6 530.7,437.2 530.7,437.5 531.1,442.0 531.1,442.3 531.5,446.1 531.5,446.3 531.8,449.3 531.9,449.5 532.2,451.8 532.2,452.0 532.6,453.3 532.6,453.3 532.7,453.4 533.0,452.3 533.0,452.0 533.3,440.4 533.4,438.3 533.6,391.0 533.7,415.6 533.7,420.6 533.9,416.8 534.1,443.8 534.1,445.7 534.5,454.5 534.5,454.5 534.5,454.5 534.8,448.4 534.8,447.2 535.2,397.1 535.2,392.6 535.6,446.6 535.6,448.1 535.9,459.8 536.0,460.2 536.3,464.1 536.3,464.2 536.7,466.0 536.7,466.1 537.1,467.1 537.1,467.1 537.4,467.6 537.5,467.7 537.8,467.9 537.8,467.9 537.9,467.9 538.2,467.8 538.2,467.8 538.6,467.4 538.6,467.3 538.9,466.2 539.0,466.1 539.3,461.8 539.3,461.1 539.7,415.1 539.7,417.6 539.9,452.4 540.1,450.2 540.1,453.9 540.4,463.3 540.5,463.3 540.5,463.4 540.8,462.5 540.8,462.3 541.2,446.5 541.2,449.2 541.3,453.1 541.5,422.4 541.6,433.9 541.6,439.9 541.9,458.6 542.0,458.7 542.1,458.9 542.3,458.4 542.3,458.3 542.7,456.6 542.7,456.4 543.1,446.7 543.1,447.4 543.2,452.4 543.4,451.2 543.5,451.0 543.8,446.2 543.8,445.6 544.2,422.2 544.2,417.0 544.3,396.0 544.6,433.2 544.6,434.5 544.8,438.5 544.9,438.2 545.0,438.1 545.3,434.5 545.3,434.2 545.7,428.9 545.7,428.5 546.0,421.6 546.1,421.0 546.4,411.7 546.4,410.9 546.8,397.2 546.8,395.9 547.2,369.8 547.2,366.8 547.4,314.0 547.5,340.1 547.6,346.1 547.9,386.6 547.9,388.0 548.2,400.9 548.3,399.5 548.3,397.7 548.6,384.6 548.7,404.0 548.7,407.4 549.0,423.9 549.1,424.5 549.4,431.3 549.4,431.7 549.7,435.0 549.8,434.8 549.8,434.3 549.9,422.3 550.2,439.9 550.2,440.5 550.5,445.0 550.6,445.3 550.9,448.3 550.9,448.5 551.3,450.7 551.3,450.8 551.5,451.3 551.7,450.3 551.7,449.8 551.9,419.3 552.0,438.5 552.1,442.3 552.4,455.4 552.4,455.6 552.7,456.5 552.8,456.1 552.8,455.9 553.0,439.3 553.2,453.7 553.2,454.6 553.3,455.7 553.5,453.2 553.6,452.6 553.9,426.8 553.9,422.1 554.1,391.1 554.3,437.4 554.3,440.0 554.7,456.8 554.7,457.3 555.0,461.7 555.1,461.9 555.4,463.8 555.4,463.9 555.8,464.8 555.8,464.8 556.1,465.3 556.2,465.3 556.3,465.3 556.5,465.1 556.5,465.0 556.8,453.1 556.9,460.5 556.9,462.1 557.2,464.9 557.3,464.9 557.3,464.9 557.6,463.7 557.7,463.6 558.0,456.5 558.0,455.0 558.2,420.4 558.4,448.6 558.4,451.1 558.6,456.7 558.8,451.4 558.8,449.4 559.0,415.4 559.1,448.3 559.2,450.6 559.5,460.2 559.5,460.3 559.8,460.7 559.9,460.7 559.9,460.6 560.3,459.9 560.3,459.8 560.6,458.5 560.7,458.4 561.0,456.6 561.0,456.5 561.4,450.3 561.4,448.1 561.5,443.2 561.6,451.3 561.8,450.5 561.8,450.2 562.1,439.9 562.2,438.2 562.4,394.5 562.5,413.7 562.5,419.5 562.9,442.5 562.9,442.8 563.0,443.2 563.3,442.5 563.3,442.4 563.6,439.5 563.7,439.3 564.0,435.4 564.0,435.1 564.4,430.3 564.4,430.0 564.8,424.0 564.8,423.5 565.1,415.8 565.2,415.1 565.5,404.7 565.5,403.8 565.9,387.5 565.9,385.9 566.2,348.5 566.3,343.3 566.4,311.1 566.6,360.7 566.6,363.9 567.0,391.8 567.0,393.1 567.4,406.7 567.4,407.0 567.7,417.3 567.8,418.0 568.1,424.9 568.1,425.3 568.5,429.2 568.5,429.2 568.9,397.1 568.9,393.8 569.2,435.8 569.3,436.5 569.6,442.2 569.6,442.4 570.0,445.2 570.0,445.3 570.1,445.6 570.4,442.0 570.4,440.4 570.6,416.4 570.7,436.6 570.8,439.5 571.1,449.1 571.1,449.1 571.5,443.1 571.5,441.6 571.8,398.6 571.9,422.8 571.9,427.8 572.2,450.2 572.3,450.6 572.6,452.3 572.6,452.2 572.6,452.2 573.0,448.8 573.0,448.3 573.4,431.6 573.4,428.9 573.6,386.4 573.7,417.9 573.8,420.8 573.8,424.1 574.1,385.8 574.1,391.5 574.1,399.2 574.5,434.4 574.5,434.2 574.5,433.6 574.8,384.0 574.9,387.8 574.9,395.3 575.2,439.5 575.3,440.1 575.4,441.0 575.6,431.6 575.6,429.3 575.9,383.1 576.0,411.6 576.0,416.7 576.3,443.6 576.4,444.2 576.5,445.4 576.7,442.1 576.7,441.2 577.1,398.7 577.1,390.9 577.2,381.6 577.5,435.3 577.5,437.0 577.8,447.3 577.9,447.5 577.9,447.7 578.2,444.4 578.2,443.8 578.6,417.2 578.6,412.6 578.7,380.3 579.0,425.7 579.0,428.4 579.3,441.7 579.3,439.0 579.4,440.0 579.7,447.1 579.7,447.0 579.7,446.9 580.1,441.9 580.1,441.2 580.5,413.8 580.5,409.0 580.6,379.3 580.8,425.2 580.9,427.5 581.2,440.5 581.2,440.8 581.4,441.5 581.6,441.1 581.6,441.0 582.0,438.1 582.0,437.8 582.3,430.5 582.4,429.6 582.7,384.1 582.7,378.6 583.1,422.5 583.1,422.9 583.2,423.4 583.5,420.8 583.5,420.3 583.8,400.1 583.8,402.8 583.9,406.0 584.0,409.5 584.2,403.4 584.2,402.5 584.6,386.4 584.6,384.8 585.0,347.5 585.0,342.2 585.1,310.1 585.3,359.5 585.4,362.7 585.7,390.6 585.7,391.9 586.1,406.1 586.1,406.9 586.5,416.2 586.5,416.8 586.8,423.5 586.8,423.9 587.2,427.9 587.2,428.1 587.3,428.2 587.6,415.1 587.6,415.7 587.6,416.7 587.8,381.8 587.9,407.3 588.0,412.1 588.3,436.1 588.3,436.8 588.7,442.2 588.7,442.5 588.9,443.8 589.1,441.8 589.1,440.3 589.2,430.3 589.4,446.9 589.5,447.2 589.8,448.8 589.8,448.8 589.9,448.8 590.2,447.3 590.2,447.0 590.6,432.4 590.6,429.7 590.8,386.8 590.9,420.7 591.0,424.8 591.3,447.9 591.3,448.5 591.7,453.3 591.7,453.4 592.0,454.6 592.1,454.6 592.1,454.5 592.4,449.5 592.5,448.2 592.7,417.1 592.8,445.4 592.8,447.4 593.1,453.2 593.2,453.1 593.2,453.0 593.6,446.5 593.6,445.5 593.9,408.1 594.0,404.0 594.0,387.1 594.3,434.7 594.3,435.4 594.5,416.4 594.7,445.4 594.7,447.1 595.1,455.5 595.1,455.7 595.4,457.5 595.5,457.6 595.8,458.0 595.8,458.0 595.9,458.0 596.2,457.7 596.2,457.7 596.6,456.7 596.6,456.6 596.9,453.6 597.0,453.2 597.3,439.8 597.3,437.5 597.5,394.1 597.7,425.2 597.7,429.4 598.0,450.2 598.1,450.6 598.4,452.8 598.4,452.9 598.5,452.9 598.8,452.5 598.8,452.4 599.2,451.1 599.2,451.0 599.5,448.7 599.6,448.4 599.9,440.0 599.9,438.3 600.1,406.9 600.3,435.6 600.3,437.3 600.5,441.5 600.7,441.0 600.7,440.8 601.0,433.9 601.1,432.7 601.3,393.9 601.4,412.5 601.4,417.3 601.7,430.9 601.8,430.8 601.8,430.7 602.2,426.9 602.2,426.5 602.5,420.5 602.6,420.0 602.9,411.8 602.9,411.1 603.3,399.3 603.3,398.2 603.7,378.2 603.7,376.1 604.0,314.1 604.1,310.5 604.4,373.9 604.4,376.1 604.8,397.1 604.8,398.1 605.2,409.0 605.2,409.4 605.4,394.5 605.5,414.0 605.6,415.7 605.9,425.7 605.9,426.2 606.3,431.6 606.3,432.0 606.7,435.9 606.7,436.1 606.9,429.7 607.0,438.4 607.1,439.1 607.4,443.1 607.4,443.3 607.8,445.9 607.8,446.0 608.1,448.1 608.2,448.2 608.5,449.7 608.5,449.8 608.9,450.5 608.9,450.5 609.3,448.1 609.3,447.6 609.6,416.2 609.7,410.1 609.7,398.1 610.0,442.6 610.0,444.2 610.4,453.5 610.4,453.8 610.8,456.2 610.8,456.4 611.1,457.5 611.2,457.6 611.5,458.3 611.5,458.4 611.9,458.9 611.9,458.9 612.3,459.1 612.3,459.1 612.5,459.2 612.6,459.1 612.7,459.1 613.0,458.7 613.0,458.6 613.4,456.6 613.4,456.3 613.8,425.3 613.8,427.6 614.0,447.5 614.1,439.5 614.2,436.7 614.3,398.7 614.5,435.7 614.5,438.8 614.9,454.4 614.9,454.7 615.3,457.0 615.3,457.0 615.6,457.3 615.6,457.3 615.7,457.3 616.0,457.0 616.0,456.9 616.4,456.3 616.4,456.2 616.8,455.2 616.8,455.2 617.1,453.8 617.2,453.6 617.5,450.6 617.5,450.1 617.8,431.6 617.9,442.4 617.9,442.3 618.1,406.9 618.2,428.9 618.3,433.0 618.6,445.2 618.6,445.2 618.6,445.2 619.0,438.4 619.0,436.9 619.2,403.2 619.4,430.9 619.4,433.2 619.6,438.3 619.7,435.2 619.8,433.7 619.9,416.5 620.1,435.7 620.1,435.8 620.2,435.9 620.5,433.7 620.5,433.4 620.9,429.2 620.9,428.9 621.2,423.5 621.3,423.1 621.6,416.2 621.6,415.6 622.0,406.3 622.0,405.5 622.4,390.3 622.4,388.3 622.7,364.5 622.8,361.5 623.0,308.7 623.1,334.8 623.1,340.9 623.5,381.8 623.5,383.4 623.9,399.7 623.9,400.5 624.1,396.3 624.2,408.9 624.3,409.2 624.4,401.3 624.6,418.6 624.6,419.3 624.9,423.9 625.0,422.8 625.0,421.3 625.1,416.8 625.4,431.1 625.4,431.5 625.7,435.8 625.8,436.1 626.1,439.4 626.1,439.6 626.5,441.9 626.5,442.0 626.7,442.4 626.9,440.7 626.9,440.0 627.1,406.0 627.2,427.8 627.3,431.8 627.6,447.2 627.6,447.5 628.0,450.2 628.0,450.3 628.3,451.8 628.4,451.9 628.7,452.7 628.7,452.7 628.8,452.7 629.1,449.7 629.1,448.2 629.2,437.7 629.4,450.0 629.5,449.6 629.5,449.2 629.8,414.2 629.8,414.8 629.9,417.2 630.0,406.2 630.2,446.2 630.2,447.5 630.6,454.4 630.6,454.6 630.8,455.1 631.0,454.0 631.0,453.5 631.2,427.8 631.3,447.6 631.4,449.9 631.7,456.9 631.7,457.0 632.1,457.4 632.1,457.4 632.5,457.0 632.5,456.9 632.8,455.0 632.9,454.8 633.2,435.1 633.2,429.3 633.3,419.8 633.5,441.1 633.6,432.4 633.6,428.4 633.7,399.4 634.0,441.4 634.0,443.3 634.3,453.1 634.4,453.3 634.7,454.2 634.7,454.2 634.7,454.2 635.1,452.7 635.1,452.4 635.5,430.5 635.5,427.4 635.5,420.5 635.7,438.3 635.8,427.7 635.9,425.4 636.2,450.2 636.2,450.3 636.4,450.6 636.6,450.2 636.6,450.2 637.0,448.7 637.0,448.6 637.3,444.1 637.4,443.1 637.5,423.7 637.7,442.6 637.7,443.0 637.9,443.7 638.1,442.8 638.1,442.7 638.5,440.3 638.5,440.1 638.8,437.2 638.8,436.9 639.2,433.4 639.2,433.1 639.6,428.9 639.6,428.6 639.9,423.5 640.0,423.1 640.3,416.6 640.3,416.1 640.7,407.5 640.7,406.7 641.0,394.2 641.1,394.2 641.1,393.2 641.4,374.1 641.5,372.1 641.8,310.1 641.8,306.5 642.2,369.9 642.2,372.1 642.6,392.6 642.6,393.8 642.9,404.6 643.0,404.9 643.0,405.0 643.2,382.7 643.3,401.6 643.3,405.2 643.7,421.0 643.7,421.5 644.1,427.5 644.1,427.9 644.4,432.4 644.5,432.7 644.8,436.2 644.8,436.5 645.0,437.4 645.2,430.3 645.2,431.6 645.6,442.4 645.6,442.6 645.9,445.0 646.0,445.2 646.3,447.2 646.3,447.3 646.7,449.0 646.7,449.2 647.1,450.7 647.1,450.8 647.4,452.1 647.5,452.1 647.8,453.3 647.8,453.3 648.2,454.3 648.2,454.3 648.6,455.1 648.6,455.2 648.9,455.9 649.0,455.9 649.3,456.4 649.3,456.4 649.7,456.8 649.7,456.8 650.0,456.9 650.0,456.9 650.1,456.9 650.4,456.4 650.4,456.3 650.8,452.5 650.8,451.8 651.1,408.4 651.2,410.9 651.2,417.8 651.5,453.5 651.6,454.0 651.9,456.6 651.9,456.7 652.3,457.1 652.3,457.1 652.4,457.1 652.7,456.9 652.7,456.9 653.0,456.5 653.1,456.5 653.4,455.8 653.4,455.8 653.8,454.7 653.8,454.6 654.2,452.7 654.2,452.5 654.5,446.8 654.6,446.0 654.9,398.1 654.9,394.6 655.3,443.7 655.3,444.5 655.7,448.1 655.7,448.1 656.0,437.8 656.1,433.5 656.1,426.2 656.4,446.0 656.4,446.0 656.5,446.0 656.8,445.0 656.8,444.9 657.2,442.9 657.2,442.7 657.5,440.2 657.6,440.0 657.9,437.1 657.9,436.9 658.3,433.4 658.3,433.1 658.7,428.9 658.7,428.6 659.0,423.5 659.1,423.1 659.4,416.7 659.4,416.2 659.8,407.8 659.8,407.1 660.1,394.0 660.2,392.4 660.5,373.8 660.5,371.6 660.9,310.1 660.9,306.5 661.3,369.3 661.3,371.5 661.6,393.1 661.7,394.2 662.0,406.3 662.0,407.0 662.4,415.0 662.4,415.4 662.6,417.6 662.8,413.8 662.8,411.6 662.9,388.7 663.1,421.9 663.2,423.1 663.5,431.4 663.5,431.7 663.9,435.9 663.9,436.2 664.3,439.3 664.3,439.5 664.6,442.0 664.7,442.1 664.9,443.0 665.0,442.8 665.0,442.6 665.3,413.5 665.4,421.5 665.4,427.5 665.8,447.0 665.8,447.3 666.1,449.5 666.2,449.6 666.5,450.4 666.5,450.3 666.9,446.6 666.9,445.6 667.2,408.2 667.3,430.9 667.3,435.2 667.6,452.1 667.7,452.4 668.0,454.6 668.0,454.6 668.4,455.5 668.4,455.5 668.7,455.8 668.8,455.8 668.8,455.7 669.1,454.4 669.2,454.2 669.5,420.4 669.5,418.6 669.9,453.6 669.9,453.8 670.0,454.3 670.2,452.7 670.3,452.3 670.6,412.2 670.6,414.4 670.9,446.9 671.0,445.9 671.0,444.7 671.2,415.1 671.4,445.6 671.4,447.5 671.7,454.7 671.8,454.8 671.9,455.0 672.1,454.7 672.1,454.6 672.5,451.1 672.5,450.5 672.9,406.1 672.9,406.8 673.2,449.8 673.3,450.3 673.6,452.6 673.6,452.6 673.7,452.6 674.0,452.0 674.0,451.9 674.4,450.1 674.4,449.9 674.7,442.9 674.8,441.7 675.0,403.2 675.1,416.5 675.1,415.3 675.5,443.9 675.5,444.2 675.7,444.8 675.9,444.3 675.9,444.1 676.2,439.1 676.3,438.0 676.4,415.9 676.6,436.9 676.6,437.4 676.8,438.2 677.0,437.1 677.0,436.9 677.4,432.8 677.4,432.3 677.6,415.3 677.7,426.3 677.8,426.9 677.8,427.2 678.1,424.1 678.1,423.7 678.5,417.5 678.5,417.0 678.9,408.7 678.9,408.0 679.2,396.2 679.3,395.1 679.6,375.1 679.6,373.0 680.0,311.0 680.0,307.4 680.3,370.5 680.4,372.4 680.7,393.6 680.7,394.7 681.1,406.4 681.1,407.3 681.5,416.3 681.5,416.8 681.8,423.2 681.9,423.6 682.2,428.3 682.2,428.6 682.5,430.7 682.6,430.6 682.6,430.5 683.0,394.8 683.0,391.4 683.3,435.1 683.4,435.8 683.7,441.4 683.7,441.7 684.1,444.5 684.1,444.7 684.5,446.8 684.5,446.9 684.8,448.5 684.9,448.6 685.1,449.2 685.2,448.9 685.2,448.7 685.4,436.7 685.6,449.2 685.6,449.7 686.0,451.8 686.0,451.8 686.1,451.9 686.3,451.1 686.4,450.8 686.6,435.2 686.7,448.8 686.7,449.2 686.8,449.4 687.1,429.0 687.1,422.9 687.2,409.9 687.5,448.5 687.5,449.3 687.8,453.4 687.9,453.4 688.0,453.7 688.2,453.2 688.2,453.0 688.5,432.0 688.6,441.8 688.6,445.4 689.0,453.5 689.0,453.5 689.1,453.6 689.3,453.2 689.4,453.2 689.7,452.2 689.7,452.1 690.1,450.4 690.1,450.3 690.5,447.6 690.5,447.3 690.8,442.5 690.8,442.1 691.2,431.0 691.2,429.6 691.6,388.1 691.6,387.9 691.9,386.1 691.9,390.6 692.0,389.4 692.2,393.0 692.3,384.6 692.3,387.2 692.3,391.6 692.5,395.2 692.6,383.7 692.7,392.5 692.7,395.8 692.9,397.0 693.0,382.1 693.1,385.3 693.1,391.2 693.3,383.2 693.4,400.8 693.4,395.4 693.5,389.8 693.6,402.3 693.8,383.3 693.8,393.8 693.8,399.0 694.0,383.8 694.2,404.9 694.2,404.6 694.2,402.5 694.3,383.2 694.5,406.2 694.6,392.8 694.6,386.4 694.6,383.2 694.8,407.3 694.9,383.7 695.0,388.9 695.1,408.4 695.3,383.2 695.3,394.3 695.3,400.2 695.4,409.2 695.6,383.6 695.7,401.3 695.7,405.5 695.8,410.0 696.0,383.0 696.1,404.0 696.1,407.3 696.1,410.4 696.3,382.9 696.4,403.7 696.5,407.1 696.5,410.7 696.7,383.3 696.8,400.6 696.8,404.7 696.9,410.2 697.1,382.5 697.2,393.2 697.2,398.8 697.3,408.8 697.6,382.3 697.6,387.1 697.8,405.3 697.9,389.1 698.0,383.4 698.0,380.5 698.2,398.0 698.3,392.4 698.3,390.2 698.7,375.9 698.7,373.9 699.1,313.1 699.1,309.5 699.4,369.9 699.5,372.8 699.8,389.9 699.8,388.1 699.8,385.3 699.9,382.0 700.2,400.6 700.2,401.1 700.4,386.1 700.6,410.1 700.6,411.2 700.7,413.0 700.9,387.9 700.9,391.0 701.0,397.3 701.1,415.1 701.3,412.9 701.3,410.7 701.4,389.3 701.7,421.7 701.7,422.2 701.7,422.4 702.0,389.5 702.0,400.9 702.1,407.3 702.3,425.3 702.4,418.4 702.4,414.9 702.6,390.4 702.8,426.6 702.8,427.3 702.9,427.8 703.1,390.9 703.2,394.3 703.2,401.3 703.4,430.1 703.5,427.5 703.6,425.7 703.7,392.9 703.9,410.3 703.9,415.5 704.1,430.5 704.3,410.3 704.3,403.2 704.4,396.4 704.7,436.1 704.7,436.2 705.0,398.5 705.0,410.3 705.1,417.0 705.3,439.1 705.4,436.8 705.4,435.3 705.6,401.6 705.8,433.3 705.8,435.8 706.0,441.7 706.2,430.7 706.2,426.4 706.3,403.6 706.5,442.1 706.6,443.0 706.6,444.2 706.9,416.6 706.9,409.7 707.0,406.3 707.3,446.0 707.3,446.1 707.7,408.9 707.7,413.3 708.0,447.6 708.1,447.5 708.4,411.2 708.4,422.7 708.4,429.1 708.7,449.6 708.8,449.1 708.8,448.5 709.1,413.3 709.2,427.6 709.2,430.4 709.5,450.6 709.5,450.0 709.6,449.4 709.8,415.2 709.9,436.9 709.9,440.8 710.2,452.1 710.3,451.3 710.3,450.6 710.6,417.3 710.7,438.5 710.7,442.2 711.0,452.8 711.0,452.1 711.1,451.7 711.3,419.9 711.4,437.1 711.4,441.4 711.7,452.9 711.8,452.6 711.8,452.3 712.1,421.4 712.1,431.9 712.2,437.5 712.5,452.3 712.5,452.2 712.5,452.1 712.9,423.6 712.9,428.4 713.2,449.7 713.3,449.3 713.3,449.0 713.6,413.4 713.7,410.1 714.0,446.8 714.0,447.1 714.1,447.5 714.4,442.6 714.4,440.5 714.5,425.5 714.8,444.6 714.8,444.6 715.1,439.1 715.2,437.7 715.3,418.1 715.5,437.2 715.5,437.8 715.6,438.5 715.9,436.7 715.9,436.4 716.2,422.8 716.3,427.2 716.3,428.8 716.4,430.0 716.6,426.6 716.7,426.1 717.0,417.1 717.0,415.5 717.4,408.1 717.4,407.2 717.8,391.0 717.8,389.4 718.1,352.0 718.2,346.8 718.3,314.8 718.5,364.3 718.5,367.6 718.9,394.6 718.9,396.1 719.3,410.6 719.3,411.4 719.6,420.3 719.7,420.7 719.8,419.6 720.0,427.9 720.0,428.3 720.4,433.6 720.4,433.9 720.6,435.2 720.7,430.1 720.8,434.3 720.8,435.9 721.1,441.9 721.2,442.1 721.5,444.9 721.5,445.1 721.9,447.2 721.9,447.3 722.2,448.5 722.3,448.5 722.4,448.6 722.6,447.8 722.6,447.6 723.0,436.9 723.0,435.0 723.3,388.0 723.4,413.1 723.4,418.6 723.7,447.0 723.8,447.6 723.9,449.6 724.1,435.3 724.1,437.6 724.5,455.3 724.5,455.4 724.9,456.9 724.9,457.0 725.2,457.4 725.2,457.4 725.3,457.3 725.6,453.5 725.6,452.4 725.8,423.0 726.0,449.1 726.0,450.9 726.2,455.4 726.4,453.9 726.4,453.2 726.7,417.2 726.7,435.3 726.8,440.2 727.1,456.8 727.1,456.9 727.2,457.0 727.5,445.3 727.5,441.4 727.7,451.3 727.9,440.1 727.9,436.3 728.0,407.8 728.2,448.1 728.3,449.8 728.6,458.2 728.6,458.4 729.0,459.7 729.0,459.8 729.4,460.0 729.4,460.0 729.7,459.9 729.8,459.9 730.1,459.5 730.1,459.4 730.5,458.6 730.5,458.5 730.9,456.2 730.9,455.8 731.2,421.1 731.3,421.5 731.6,452.2 731.6,452.2 731.6,452.1 732.0,425.3 732.0,418.7 732.2,432.1 732.3,411.9 732.3,425.4 732.4,431.1 732.5,445.4 732.7,440.2 732.7,443.8 733.1,451.9 733.1,451.9 733.5,451.1 733.5,451.0 733.8,449.4 733.9,449.2 734.2,447.0 734.2,446.8 734.6,443.8 734.6,443.5 735.0,427.8 735.0,423.3 735.0,421.6 735.2,436.5 735.3,435.9 735.4,435.7 735.7,430.8 735.7,430.4 736.1,422.7 736.1,421.9 736.4,398.7 736.5,409.7 736.5,410.5 736.5,410.7 736.8,400.4 736.9,399.2 737.2,373.1 737.2,370.2 737.5,317.5 737.6,343.6 737.6,349.6 738.0,390.5 738.0,392.2 738.3,409.0 738.4,409.9 738.7,420.3 738.7,420.9 739.1,428.3 739.1,428.7 739.5,434.3 739.5,434.6 739.8,438.4 739.9,438.6 739.9,438.8 740.1,426.3 740.2,436.1 740.2,438.2 740.6,445.1 740.6,445.3 741.0,446.8 741.0,446.8 741.3,430.6 741.4,425.0 741.4,413.3 741.7,447.7 741.7,448.3 742.1,451.8 742.1,451.9 742.3,452.2 742.5,451.9 742.5,451.7 742.7,435.9 742.8,444.1 742.8,445.9 742.9,447.5 743.2,437.7 743.2,435.6 743.5,387.7 743.6,413.0 743.6,418.5 743.9,448.3 744.0,449.1 744.3,454.5 744.3,454.7 744.6,455.8 744.7,455.7 744.7,455.7 745.1,446.0 745.1,443.0 745.3,423.1 745.4,449.6 745.5,450.9 745.7,454.2 745.8,452.7 745.8,452.2 746.2,407.3 746.2,403.8 746.6,452.4 746.6,453.2 746.9,458.3 747.0,458.4 747.3,459.7 747.3,459.7 747.7,460.2 747.7,460.2 748.1,460.3 748.1,460.3 748.3,460.4 748.4,460.4 748.5,460.4 748.8,460.3 748.8,460.2 749.2,460.0 749.2,460.0 749.6,459.7 749.6,459.7 749.9,459.1 750.0,459.1 750.3,458.1 750.3,458.0 750.7,455.4 750.7,455.0 751.1,437.1 751.1,433.1 751.2,404.2 751.4,444.8 751.5,446.5 751.8,454.6 751.8,454.7 752.1,455.3 752.2,455.3 752.2,455.3 752.6,454.7 752.6,454.7 752.9,453.6 753.0,453.5 753.3,452.2 753.3,452.0 753.7,450.3 753.7,450.1 754.0,447.9 754.1,447.7 754.4,444.9 754.4,444.6 754.8,440.9 754.8,440.6 755.2,435.2 755.2,434.7 755.5,421.4 755.6,418.8 755.7,395.9 755.9,416.5 755.9,416.6 756.1,405.4 756.3,406.6 756.3,405.6 756.7,380.4 756.7,377.4 756.9,324.7 757.0,350.8 757.1,356.8 757.4,397.5 757.4,399.1 757.8,412.6 757.8,412.3 757.8,411.6 758.1,422.0 758.2,422.0 758.2,421.4 758.3,410.6 758.5,431.5 758.6,432.1 758.9,437.2 758.9,437.3 759.0,437.6 759.3,429.7 759.3,426.7 759.4,401.1 759.7,431.7 759.7,434.6 760.0,445.8 760.1,446.1 760.4,448.7 760.4,448.9 760.8,450.2 760.8,450.3 761.1,450.6 761.2,450.5 761.2,450.4 761.5,440.9 761.6,437.8 761.7,414.7 761.9,447.3 761.9,448.3 762.3,452.5 762.3,452.6 762.7,453.3 762.7,453.3 762.8,453.4 763.0,453.3 763.1,453.2 763.4,452.4 763.4,452.3 763.8,448.9 763.8,448.5 764.1,426.5 764.2,422.1 764.3,392.1 764.5,435.4 764.5,437.5 764.7,444.4 764.9,438.7 764.9,435.7 765.0,415.7 765.3,447.2 765.3,448.1 765.6,452.4 765.7,452.5 765.9,452.8 766.0,452.5 766.0,452.4 766.3,432.5 766.4,437.6 766.4,442.1 766.8,453.0 766.8,453.0 767.0,453.2 767.1,453.2 767.2,453.2 767.5,452.5 767.5,452.4 767.8,436.5 767.9,444.0 767.9,446.8 768.3,452.3 768.3,452.3 768.3,452.3 768.6,451.9 768.7,451.9 769.0,450.2 769.0,450.0 769.4,420.6 769.4,415.6 769.8,448.2 769.8,448.4 769.8,448.5 770.1,432.4 770.2,427.1 770.2,425.2 770.5,449.0 770.5,449.1 770.7,449.5 770.9,449.3 770.9,449.2 771.3,447.7 771.3,447.5 771.6,440.0 771.7,438.6 771.9,396.6 772.0,420.3 772.0,425.2 772.4,444.7 772.4,445.0 772.8,446.5 772.8,446.5 772.8,446.5 773.1,446.1 773.2,446.1 773.5,444.9 773.5,444.8 773.9,442.1 773.9,441.8 774.2,426.2 774.3,422.6 774.4,394.9 774.6,431.7 774.6,433.0 774.9,436.3 775.0,435.8 775.0,435.6 775.4,430.3 775.4,429.7 775.7,417.4 775.8,416.0 776.1,380.9 776.1,375.8 776.3,343.8 776.5,392.8 776.5,395.9 776.9,420.6 776.9,421.7 777.2,431.1 777.3,431.5 777.5,433.4 777.6,429.1 777.6,426.1 777.7,418.4 778.0,437.4 778.0,437.6 778.2,438.1 778.4,434.8 778.4,433.1 778.5,417.6 778.7,438.6 778.8,439.0 779.1,440.6 779.1,440.6 779.4,440.8 779.5,440.7 779.5,440.7 779.9,440.5 779.9,440.5 780.2,439.5 780.3,439.2 780.4,432.6 780.6,438.5 780.6,438.5 781.0,433.8 781.0,432.8 781.3,395.8 781.4,418.0 781.4,422.2 781.7,436.8 781.8,437.0 782.1,437.8 782.1,437.8 782.5,437.5 782.5,437.5 782.9,437.0 782.9,436.9 783.2,436.0 783.3,435.9 783.6,431.8 783.6,430.8 783.8,407.9 784.0,430.0 784.0,430.7 784.1,431.8 784.3,421.3 784.4,419.9 784.5,425.6 784.7,392.1 784.7,388.8 785.1,429.3 785.1,429.7 785.5,431.8 785.5,431.8 785.6,431.8 785.8,431.7 785.9,431.6 786.2,431.1 786.2,431.0 786.6,430.3 786.6,430.3 787.0,429.5 787.0,429.4 787.3,428.6 787.4,428.5 787.7,427.6 787.7,427.5 788.1,426.3 788.1,426.2 788.5,423.8 788.5,423.4 788.7,400.3 788.8,416.0 788.9,418.1 789.2,422.8 789.2,422.8 789.2,422.7 789.6,421.8 789.6,421.8 790.0,420.5 790.0,420.4 790.3,418.2 790.4,417.9 790.6,402.1 790.7,413.6 790.7,414.6 790.9,416.2 791.1,415.7 791.1,415.6 791.5,414.0 791.5,413.9 791.8,411.6 791.9,411.4 792.2,404.5 792.2,402.6 792.4,383.2 792.6,405.2 792.6,405.5 792.7,405.8 793.0,404.7 793.0,404.5 793.3,401.7 793.4,401.5 793.7,398.1 793.7,397.8 794.1,393.7 794.1,393.3 794.5,388.0 794.5,387.6 794.8,380.3 794.8,379.7 795.2,368.1 795.2,366.9 795.6,337.3 795.6,332.7 795.7,303.0 795.9,313.2 796.0,306.0 796.0,300.2 796.2,334.8 796.3,328.4 796.3,324.2 796.5,297.0 796.7,339.8 796.7,341.1 796.8,342.2 797.1,296.4 797.1,297.1 797.4,348.2 797.5,348.4 797.8,303.8 797.8,296.9 797.9,295.0 798.2,349.7 798.2,350.9 798.3,353.2 798.6,342.4 798.6,339.6 798.8,293.9 798.9,326.5 799.0,331.2 799.3,356.9 799.3,357.1 799.4,357.2 799.7,340.7 799.7,337.6 799.9,292.4 800.1,327.6 800.1,332.1 800.4,359.6 800.5,360.2 800.6,361.2 800.8,354.7 800.8,353.2 801.2,293.4 801.2,294.2 801.6,354.3 801.6,355.9 801.9,365.8 802.0,365.7 802.3,352.7 802.3,350.6 802.6,293.9 802.7,303.8 802.7,311.7 803.1,359.6 803.1,361.0 803.4,370.4 803.5,370.4 803.8,362.0 803.8,360.6 804.2,310.6 804.2,302.6 804.2,296.4 804.6,353.6 804.6,355.8 804.9,372.6 805.0,373.2 805.1,375.2 805.3,374.0 805.3,373.6 805.7,357.7 805.7,355.5 806.0,298.3 806.0,305.1 806.1,313.1 806.4,363.8 806.4,365.4 806.8,378.3 806.8,378.8 807.0,380.3 807.2,379.3 807.2,378.9 807.5,365.7 807.6,364.0 807.9,304.1 807.9,300.5 808.3,362.4 808.3,364.3 808.7,380.8 808.7,381.4 809.0,385.4 809.1,385.4 809.4,379.6 809.4,378.8 809.8,355.4 809.8,352.3 810.0,303.0 810.2,334.0 810.2,339.3 810.5,374.8 810.6,376.1 810.9,387.7 810.9,388.2 811.2,390.8 811.3,390.7 811.3,390.6 811.7,384.6 811.7,383.8 812.0,361.7 812.1,358.9 812.3,307.2 812.4,333.8 812.4,339.6 812.8,378.0 812.8,379.4 813.2,391.7 813.2,392.3 813.5,395.9 813.6,395.9 813.9,392.8 813.9,392.2 814.3,379.0 814.3,377.4 814.7,330.2 814.7,322.6 814.7,309.6 815.0,366.4 815.1,368.9 815.4,389.7 815.4,390.6 815.8,399.1 815.8,399.5 816.1,401.9 816.2,401.9 816.5,398.4 816.5,397.8 816.9,384.1 816.9,382.5 817.3,329.4 817.3,321.6 817.3,316.7 817.6,376.0 817.7,378.2 818.0,397.0 818.0,397.8 818.4,405.2 818.4,405.5 818.7,407.5 818.8,407.5 818.8,407.5 819.1,404.7 819.2,404.2 819.5,394.2 819.5,393.0 819.9,363.3 819.9,359.3 820.1,319.0 820.3,361.4 820.3,365.2 820.6,394.0 820.7,395.1 821.0,405.9 821.0,406.4 821.4,410.8 821.4,410.9 821.6,411.5 821.8,411.3 821.8,411.2 822.1,407.3 822.2,406.8 822.5,395.4 822.5,394.1 822.9,355.9 822.9,349.9 823.0,324.7 823.3,376.4 823.3,379.1 823.6,398.4 823.7,399.0 823.9,401.5 824.0,401.0 824.0,400.7 824.4,392.6 824.4,391.6 824.8,368.1 824.8,365.3 825.0,313.0 825.1,339.0 825.2,344.9 825.5,382.1 825.5,383.2 825.7,385.7 825.9,375.5 825.9,372.6 826.1,331.1 826.2,368.5 826.3,372.6 826.6,400.6 826.6,401.6 827.0,411.6 827.0,412.1 827.4,417.2 827.4,417.5 827.7,420.1 827.8,420.2 828.0,420.6 828.1,420.4 828.1,420.3 828.5,417.1 828.5,416.7 828.9,405.5 828.9,404.2 829.2,362.2 829.3,355.3 829.3,336.3 829.6,390.9 829.6,393.4 830.0,413.8 830.0,414.7 830.4,422.7 830.4,423.1 830.7,426.8 830.8,427.0 831.1,428.4 831.1,428.5 831.2,428.5 831.5,428.0 831.5,427.9 831.9,424.6 831.9,424.2 832.2,414.3 832.3,413.1 832.6,379.5 832.6,374.4 832.8,342.8 833.0,391.6 833.0,394.7 833.4,418.0 833.4,418.9 833.7,427.3 833.8,427.7 834.1,431.4 834.1,431.6 834.5,433.2 834.5,433.3 834.7,433.5 834.9,433.4 834.9,433.3 835.2,431.7 835.3,431.5 835.6,426.4 835.6,425.8 836.0,410.6 836.0,408.7 836.3,350.0 836.3,350.0 836.4,356.2 836.7,412.5 836.7,414.1 837.1,427.6 837.1,428.1 837.5,433.3 837.5,433.5 837.8,435.7 837.9,435.9 838.2,436.7 838.2,436.8 838.4,436.9 838.6,436.8 838.6,436.7 839.0,435.7 839.0,435.5 839.3,432.3 839.4,431.9 839.7,420.7 839.7,419.1 840.1,362.5 840.1,368.1 840.5,421.2 840.5,422.4 840.8,430.7 840.9,430.9 841.2,432.1 841.2,432.1 841.2,432.0 841.6,429.5 841.6,429.0 841.9,403.1 842.0,419.8 842.0,422.2 842.2,426.7 842.3,426.0 842.4,425.8 842.7,421.7 842.7,421.4 843.1,415.0 843.1,414.5 843.5,404.7 843.5,403.8 843.8,385.1 843.9,382.7 844.2,350.7 844.2,345.6 844.4,313.7 844.6,362.4 844.6,365.8 845.0,393.5 845.0,394.7 845.3,408.2 845.4,408.9 845.7,417.4 845.7,417.9 846.1,423.7 846.1,424.0 846.5,428.1 846.5,428.4 846.8,431.2 846.8,431.4 847.2,432.7 847.2,432.8 847.2,432.8 847.6,430.7 847.6,430.2 847.9,403.6 848.0,398.0 848.1,374.9 848.3,421.8 848.3,423.7 848.6,431.8 848.7,428.4 848.7,425.5 848.8,414.4 849.1,437.8 849.1,438.2 849.4,440.7 849.5,440.8 849.8,441.7 849.8,441.7 849.9,441.7 850.2,440.7 850.2,440.3 850.4,423.6 850.6,439.1 850.6,439.7 850.7,440.4 850.9,427.1 850.9,429.4 851.0,433.1 851.2,440.5 851.3,440.2 851.3,440.1 851.7,436.3 851.7,435.8 852.1,421.5 852.1,419.4 852.4,371.1 852.5,367.9 852.8,423.9 852.8,425.3 853.2,434.1 853.2,434.2 853.2,434.2 853.6,425.2 853.6,423.3 853.8,376.1 853.9,401.3 854.0,406.8 854.3,435.9 854.3,436.7 854.7,442.0 854.7,442.2 855.1,443.9 855.1,444.0 855.4,444.5 855.5,444.5 855.5,444.5 855.8,444.3 855.8,444.2 856.2,442.1 856.2,441.8 856.6,425.7 856.6,422.1 856.7,393.5 856.9,420.7 856.9,420.5 857.3,441.6 857.3,441.9 857.7,443.9 857.7,444.0 858.0,444.3 858.0,444.3 858.1,444.3 858.4,444.0 858.4,444.0 858.8,443.5 858.8,443.5 859.2,442.7 859.2,442.6 859.5,441.5 859.6,441.4 859.9,439.1 859.9,438.7 860.2,420.9 860.3,431.8 860.3,433.2 860.4,434.7 860.7,430.6 860.7,429.8 861.0,382.9 861.1,379.4 861.4,420.2 861.4,421.7 861.6,417.4 861.8,427.9 861.8,428.0 861.8,428.1 862.2,425.9 862.2,425.6 862.5,418.2 862.6,417.3 862.9,371.3 862.9,367.8 863.3,407.8 863.3,407.8 863.7,400.9 863.7,400.0 864.0,384.4 864.1,382.9 864.4,345.7 864.4,340.5 864.6,308.4 864.8,357.8 864.8,360.9 865.2,388.4 865.2,389.7 865.5,403.7 865.6,404.4 865.9,411.0 865.9,410.6 865.9,409.7 866.0,403.0 866.3,419.4 866.3,420.0 866.7,425.8 866.7,426.1 867.0,430.1 867.1,430.3 867.3,432.7" stroke="#4c72b0" stroke-width="2.0" fill="none" stroke-linejoin="round" stroke-linecap="round"/>
<rect x="243.7" y="281.4" width="623.5" height="252.89999999999998" fill="none" stroke="#cccccc" stroke-width="1.5"/>
<path d="M368.5,282.2v6.3M493.2,282.2v6.3M617.9,282.2v6.3M742.6,282.2v6.3M866.7,526.1h-6.3M866.7,488.8h-6.3M866.7,451.4h-6.3M866.7,414.1h-6.3M866.7,376.8h-6.3M866.7,339.4h-6.3M866.7,302.0h-6.3" stroke="#2a2a2a" stroke-width="1.6" fill="none"/>
<text x="243.8" y="546.7" font-size="12.7" text-anchor="middle">500</text>
<text x="368.5" y="546.7" font-size="12.7" text-anchor="middle">510</text>
<text x="493.2" y="546.7" font-size="12.7" text-anchor="middle">520</text>
<text x="617.9" y="546.7" font-size="12.7" text-anchor="middle">530</text>
<text x="742.6" y="546.7" font-size="12.7" text-anchor="middle">540</text>
<text x="867.3" y="546.7" font-size="12.7" text-anchor="middle">550</text>
<text x="240.5" y="530.1" font-size="12.7" text-anchor="end">−5</text>
<text x="240.5" y="492.8" font-size="12.7" text-anchor="end">−4</text>
<text x="240.5" y="455.4" font-size="12.7" text-anchor="end">−3</text>
<text x="240.5" y="418.1" font-size="12.7" text-anchor="end">−2</text>
<text x="240.5" y="380.8" font-size="12.7" text-anchor="end">−1</text>
<text x="240.5" y="343.4" font-size="12.7" text-anchor="end">0</text>
<text x="240.5" y="306.0" font-size="12.7" text-anchor="end">1</text>
<text x="555.5" y="260.5" font-size="14.7" text-anchor="middle">CO2 Absorption Spectrum for the atmosphere: VenusCO2.dat</text>
<text x="555.5" y="276.5" font-size="14.7" text-anchor="middle">Level 50: height 70.0 [km], pressure 3.475E-02 [atm], temperature 233.0 [K]</text>
<text x="555.9" y="565.8" font-size="14.7" text-anchor="middle">Wavenumber [cm<tspan font-size="10.3" dy="-5.5" dx="1.5">−</tspan><tspan font-size="10.3" dx="0.8">1</tspan><tspan dy="5.5" dx="1.8">]</tspan></text>
<text transform="translate(215.5,408) rotate(-90)" font-size="14.7" text-anchor="middle">Volume Absorption Coefficient [km<tspan font-size="10.3" dy="-5.5" dx="1.5">−</tspan><tspan font-size="10.3" dx="0.8">1</tspan><tspan dy="5.5" dx="1.8">]</tspan></text>
</svg>
<div class="btn" style="left:185.5px;top:602.7px;width:106.2px;"><span>GET CHART</span></div>
<div class="btn" style="left:438.2px;top:666.6px;width:199.8px;"><span style="transform:scaleX(0.957)">DOWNLOAD ALL PT-TABLES</span></div>
<div class="lbl" style="left:438.2px;top:700.6px;width:199.8px;text-align:center;font-size:11.3px;line-height:14px;font-style:italic;color:#222;letter-spacing:-0.17px;">See the <a style="color:#551a8b;text-decoration:underline;">data format</a></div>
</div>
</body>
</html>
